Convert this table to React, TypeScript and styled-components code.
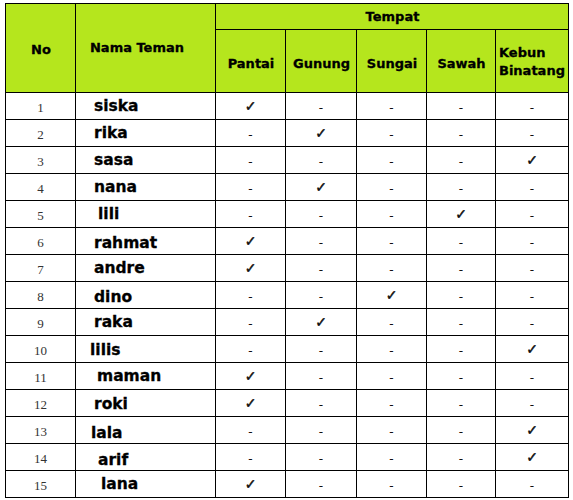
import React from "react";
import styled, { createGlobalStyle } from "styled-components";

const Global = createGlobalStyle`
  html, body { margin: 0; padding: 0; background: #ffffff; }
  body { font-family: "DejaVu Sans", sans-serif; color: #000; }
`;

const Page = styled.div`
  padding: 3px 0 0 5px;
`;

const Table = styled.table`
  border-collapse: collapse;
  table-layout: fixed;
  width: 563px;
`;

const Col = styled.col<{ $w: number }>`
  width: ${(p) => p.$w}px;
`;

const HeadCell = styled.th<{ $align?: string; $h?: number; $pt?: number; $pr?: number }>`
  background: #b5e61d;
  border: 1px solid #000;
  font-family: "DejaVu Sans", sans-serif;
  font-weight: bold;
  font-size: 13px;
  -webkit-text-stroke: 0.3px #000;
  text-align: ${(p) => p.$align || "center"};
  vertical-align: middle;
  height: ${(p) => p.$h ?? 26}px;
  padding: ${(p) => p.$pt ?? 0}px ${(p) => p.$pr ?? 2}px 0 3px;
  box-sizing: border-box;
  line-height: 18px;
`;

const Row = styled.tr`
  height: 27px;
`;

const NumCell = styled.td`
  border: 1px solid #000;
  text-align: center;
  font-family: "Liberation Serif", serif;
  font-size: 13px;
  color: #333;
  padding: 3px 0 0 0;
  vertical-align: middle;
`;

const NameCell = styled.td<{ $x: number; $y: number }>`
  border: 1px solid #000;
  font-family: "DejaVu Sans", sans-serif;
  font-weight: 900;
  font-size: 15.5px;
  -webkit-text-stroke: 0.3px #000;
  padding: ${(p) => p.$y}px 0 0 ${(p) => p.$x}px;
  vertical-align: middle;
`;

const MarkCell = styled.td<{ $check: boolean }>`
  border: 1px solid #000;
  text-align: center;
  vertical-align: middle;
  font-family: "DejaVu Sans", sans-serif;
  font-weight: ${(p) => (p.$check ? "bold" : "normal")};
  font-size: ${(p) => (p.$check ? 14 : 12)}px;
  -webkit-text-stroke: ${(p) => (p.$check ? 0.4 : 0.1)}px #000;
  padding: ${(p) => (p.$check ? 0 : 4)}px 0 0 0;
  color: #111;
`;

const places = ["Pantai", "Gunung", "Sungai", "Sawah", "Kebun Binatang"];
const widths = [70, 140, 70, 71, 70, 69, 73];

const rows: { n: number; name: string; at: number; x: number; y: number }[] = [
  { n: 1, name: "siska", at: 0, x: 18, y: 0 },
  { n: 2, name: "rika", at: 1, x: 18, y: 0 },
  { n: 3, name: "sasa", at: 4, x: 18, y: 0 },
  { n: 4, name: "nana", at: 1, x: 18, y: 0 },
  { n: 5, name: "lili", at: 3, x: 22, y: 0 },
  { n: 6, name: "rahmat", at: 0, x: 18, y: 3 },
  { n: 7, name: "andre", at: 0, x: 18, y: 0 },
  { n: 8, name: "dino", at: 2, x: 18, y: 4 },
  { n: 9, name: "raka", at: 1, x: 18, y: 0 },
  { n: 10, name: "lilis", at: 4, x: 14, y: 2 },
  { n: 11, name: "maman", at: 0, x: 21, y: 0 },
  { n: 12, name: "roki", at: 0, x: 18, y: 2 },
  { n: 13, name: "lala", at: 4, x: 15, y: 6 },
  { n: 14, name: "arif", at: 4, x: 22, y: 6 },
  { n: 15, name: "lana", at: 0, x: 25, y: 0 },
];

export default function App() {
  return (
    <Page>
      <Global />
      <Table>
        <colgroup>
          {widths.map((w, i) => (
            <Col key={i} $w={w} />
          ))}
        </colgroup>
        <thead>
          <tr>
            <HeadCell rowSpan={2} $pt={4}>No</HeadCell>
            <HeadCell rowSpan={2} $pr={20}>Nama Teman</HeadCell>
            <HeadCell colSpan={5} $h={26}>Tempat</HeadCell>
          </tr>
          <tr>
            {places.map((p, i) => (
              <HeadCell key={p} $h={63} $pt={i === 4 ? 2 : 6} $align={i === 4 ? "left" : "center"}>
                {p === "Kebun Binatang" ? (
                  <>
                    Kebun
                    <br />
                    Binatang
                  </>
                ) : (
                  p
                )}
              </HeadCell>
            ))}
          </tr>
        </thead>
        <tbody>
          {rows.map((r) => (
            <Row key={r.n}>
              <NumCell>{r.n}</NumCell>
              <NameCell $x={r.x} $y={r.y}>{r.name}</NameCell>
              {places.map((p, i) => (
                <MarkCell key={p} $check={i === r.at}>
                  {i === r.at ? "✓" : "-"}
                </MarkCell>
              ))}
            </Row>
          ))}
        </tbody>
      </Table>
    </Page>
  );
}
